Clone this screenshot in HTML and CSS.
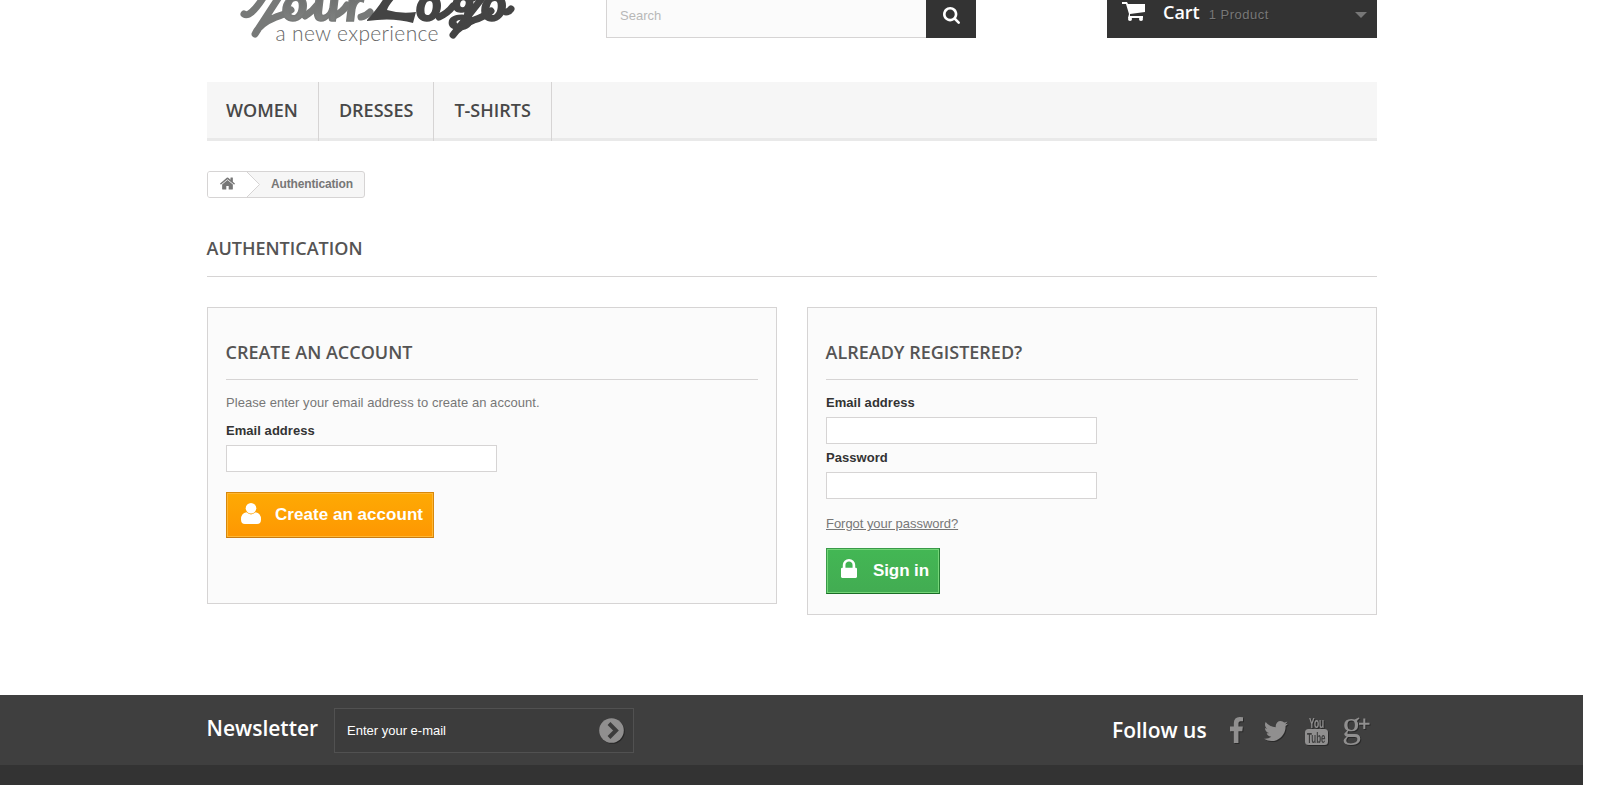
FILE: index.html
```html
<!DOCTYPE html>
<html lang="en">
<head>
<meta charset="utf-8">
<title>Login - My Store</title>
<link rel="stylesheet" href="styles.css">
</head>
<body>
<div class="page">
  <header class="container header">
    <a class="logo">
      <svg width="300" height="60" viewBox="230 0 300 60">
        <defs><linearGradient id="ink" x1="0" y1="0" x2="0" y2="1"><stop offset="0" stop-color="#5f6160"/><stop offset="1" stop-color="#858786"/></linearGradient></defs>
        <path class="swash-light" d="M244 14Q250 18 263 -2M279 -3L255 34Q259 24 276 17Q284 15 291 10M305 16Q313 11 318 4M334 16Q343 12 347 5M361 17Q366 16 370 12"/>
        <path class="wedge" d="M367 20Q378 8 384 -2H395Q388 6 387 10Q400 14 416 12L413 23Q393 17 367 21Z"/>
        <path class="swash-dark" d="M439 17Q448 13 453 6M483 -3L453 35Q459 26 474 20Q484 17 491 11M506 12Q509 12 511 9"/>
        <text class="mark light" x="282 313 346" y="21">our</text>
        <text class="mark dark" x="416 451 481" y="21">ogo</text>
        <text class="tagline" x="275.500" y="40.500" textLength="163">a new experience</text>
      </svg>
    </a>
    <div class="search">
      <span class="search-field">Search</span>
      <span class="search-button"><svg width="17" height="17" viewBox="64 128 1664 1664"><path d="M1216 832q0-185-131.500-316.500t-316.500-131.500-316.500 131.500-131.500 316.500 131.500 316.500 316.500 131.500 316.500-131.500 131.500-316.500zm512 832q0 52-38 90t-90 38q-54 0-90-38l-343-342q-179 124-399 124-143 0-273.500-55.500t-225-150-150-225-55.500-273.500 55.500-273.500 150-225 225-150 273.500-55.500 273.500 55.500 225 150 150 225 55.500 273.500q0 220-124 399l343 343q37 37 37 90z"/></svg></span>
    </div>
    <div class="cart">
      <svg class="cart-icon" width="23" height="19" viewBox="0 0 23 19"><path d="M0 0H5L6 2H23V10L8 12V14H21V16H6L7 12L4 2H0Z"/><circle cx="8" cy="17" r="2"/><circle cx="19" cy="17" r="2"/></svg>
      <b class="cart-title">Cart</b><span class="cart-count">1 Product</span>
      <svg class="cart-arrow" width="12" height="6" viewBox="0 0 12 6"><path d="M0 0H12L6 6Z"/></svg>
    </div>
  </header>

  <nav class="container menu">
    <a>Women</a><a>Dresses</a><a>T-shirts</a>
  </nav>

  <div class="container">
    <div class="breadcrumb">
      <span class="home"><svg width="15" height="13" viewBox="89 244 1614 1292"><path d="M1472 992v480q0 26-19 45t-45 19h-384v-384h-256v384h-384q-26 0-45-19t-19-45v-480q0-1 .5-3t.5-3l575-474 575 474q1 2 1 6zm223-69l-62 74q-8 9-21 11h-3q-13 0-21-7l-692-577-692 577q-12 8-24 7-13-2-21-11l-62-74q-8-10-7-23.500t11-21.500l719-599q32-26 76-26t76 26l244 204v-195q0-14 9-23t23-9h192q14 0 23 9t9 23v408l219 182q10 8 11 21.500t-7 23.500z"/></svg></span>
      <svg class="crumb-arrow" width="13" height="25" viewBox="0 0 13 25"><path class="fill" d="M0 0L12.500 12.500L0 25Z"/><path class="edge" d="M0 0L12.500 12.500L0 25"/></svg>
      <span class="crumb">Authentication</span>
    </div>
    <h1 class="page-heading">Authentication</h1>
    <main class="columns">
      <form class="box create">
        <h3 class="subheading">Create an account</h3>
        <p class="hint">Please enter your email address to create an account.</p>
        <label class="label">Email address</label>
        <div class="input"></div>
        <div class="button orange">
          <svg width="20" height="21" viewBox="0 0 20 21"><path d="M5.500 9.300Q10 13.500 14.500 9.300Q20 10 20 16.500Q20 21 16 21H4Q0 21 0 16.500Q0 10 5.500 9.300Z"/><circle cx="10" cy="5.300" r="5.300"/></svg>
          <span>Create an account</span>
        </div>
      </form>
      <form class="box login">
        <h3 class="subheading">Already registered?</h3>
        <label class="label">Email address</label>
        <div class="input"></div>
        <label class="label second">Password</label>
        <div class="input"></div>
        <a class="forgot">Forgot your password?</a>
        <div class="button green">
          <svg width="16" height="19" viewBox="320 128 1152 1408" preserveAspectRatio="none"><path d="M640 768h512v-192q0-106-75-181t-181-75-181 75-75 181v192zm832 96v576q0 40-28 68t-68 28h-960q-40 0-68-28t-28-68v-576q0-40 28-68t68-28h32v-192q0-184 132-316t316-132 316 132 132 316v192h32q40 0 68 28t28 68z"/></svg>
          <span>Sign in</span>
        </div>
      </form>
    </main>
  </div>

  <footer class="footer">
    <div class="container footer-row">
      <h4 class="newsletter-title">Newsletter</h4>
      <div class="newsletter-field"><span>Enter your e-mail</span>
        <svg class="go" width="26" height="26" viewBox="0 0 26 26"><circle cx="12.500" cy="12.500" r="12.300"/><path d="M10 5.500L17 12.500L10 19.500"/></svg>
      </div>
      <h4 class="follow-title">Follow us</h4>
      <div class="social">
        <svg width="13" height="26" viewBox="479 0 864 1664" preserveAspectRatio="none"><path d="M1343 12v264h-157q-86 0-116 36t-30 108v189h293l-39 296h-254v759h-306v-759h-255v-296h255v-218q0-186 104-288.500t277-102.500q147 0 228 12z"/></svg>
        <svg class="twitter" width="24" height="20" viewBox="108 256 1576 1280" preserveAspectRatio="none"><path d="M1684 408q-67 98-162 167 1 14 1 42 0 130-38 259.500t-115.500 248.500-184.500 210.500-258 146-323 54.500q-271 0-496-145 35 4 78 4 225 0 401-138-105-2-188-64.500t-114-159.500q33 5 61 5 43 0 85-11-112-23-185.500-111.500t-73.500-205.500v-4q68 38 146 41-66-44-105-115t-39-154q0-88 44-163 121 149 294.500 238.500t371.500 99.500q-8-38-8-74 0-134 94.500-228.500t228.500-94.500q140 0 236 102 109-21 205-78-37 115-142 178 93-10 186-50z"/></svg>
        <svg class="youtube" width="23" height="28" viewBox="0 0 23 28"><text class="you" transform="translate(4 10.500) scale(.6 1)">You</text><rect y="12" width="23" height="16" rx="3.500"/><text class="tube" transform="translate(2 25.500) scale(.57 1)">Tube</text></svg>
        <svg class="google" width="27" height="28" viewBox="0 0 27 28"><text x="-1" y="19.500">g</text><path d="M16 6.800H26.500M21.300 1.500V12"/></svg>
      </div>
    </div>
  </footer>
</div>
</body>
</html>
```

FILE: styles.css
```css
* { box-sizing: border-box; }
body { margin: 0; background: #fff; overflow: hidden; font: 13px/18px "Liberation Sans", Arial, sans-serif; color: #777; }
h1, h3, h4, p { margin: 0; }
svg { display: block; flex: none; }
.page { width: 1583px; height: 785px; display: flex; flex-direction: column; }
.container { width: 1170px; margin-left: 207px; }

.header { display: flex; height: 82px; align-items: flex-start; }
.logo { margin-left: 23px; width: 376px; }
.mark { font: italic 900 49px Lato, sans-serif; stroke-width: 1.5; }
.light { fill: url(#ink); stroke: #777978; }
.dark { fill: #444; stroke: #444; }
.swash-light, .swash-dark { fill: none; stroke-width: 7; stroke-linecap: round; stroke-linejoin: round; }
.swash-light { stroke: #777978; }
.swash-dark { stroke: #444; }
.wedge { fill: #444; }
.tagline { font: 300 21px Lato, sans-serif; fill: #666; }
.search { display: flex; width: 370px; height: 38px; }
.search-field { flex: 1; padding: 7px 13px; background: #fbfbfb; border: solid #d6d4d4; border-width: 0 0 1px 1px; color: #b8b8b8; }
.search-button { width: 50px; background: #333; padding: 7px 0 0 17px; }
.search-button svg { fill: #fff; }
.cart { display: flex; width: 270px; height: 38px; margin-left: auto; padding-left: 15px; background: #333; }
.cart-icon { margin-top: 2px; fill: #fff; }
.cart-title { margin-left: 18px; font: 600 18px/25px "Open Sans", sans-serif; color: #fff; }
.cart-count { margin: 6px 0 0 9px; letter-spacing: .5px; text-shadow: 1px 1px rgba(0,0,0,.2); }
.cart-arrow { margin: 12px 10px 0 auto; fill: #777; }

.menu { display: flex; height: 59px; background: linear-gradient(#f6f6f6 56px, #e9e9e9 56px); }
.menu a { padding: 17px 20px 0; border-right: 1px solid #d6d4d4; font: 600 18px/22px "Open Sans", sans-serif; color: #484848; text-transform: uppercase; }
.menu a:first-child { padding-left: 19px; }

.breadcrumb { display: flex; width: 158px; height: 27px; margin-top: 30px; border: 1px solid #d6d4d4; border-radius: 3px; background: #f6f6f6; font-size: 12px; font-weight: bold; line-height: 24px; overflow: hidden; }
.home { width: 39px; padding: 5px 0 0 12px; background: #fff; }
.home svg { fill: #777; }
.crumb-arrow .fill { fill: #fff; }
.crumb-arrow .edge { fill: none; stroke: #d6d4d4; }
.crumb { margin-left: 11px; letter-spacing: -.15px; }
.page-heading { margin: 39px 0 30px; height: 40px; border-bottom: 1px solid #d6d4d4; font: 600 18px/22px "Open Sans", sans-serif; color: #555454; text-transform: uppercase; text-indent: -.5px; }

.columns { display: grid; grid-template-columns: 570px 570px; gap: 30px; align-items: start; }
.box { padding: 0 18px; border: 1px solid #d6d4d4; background: #fbfbfb; }
.create { height: 297px; }
.login { height: 308px; }
.subheading { margin-top: 33px; height: 39px; border-bottom: 1px solid #d6d4d4; font: 600 18px/22px "Open Sans", sans-serif; color: #555454; text-transform: uppercase; text-indent: -.5px; }
.hint { margin-top: 14px; letter-spacing: .04px; }
.label { display: block; margin-top: 14px; font-weight: bold; color: #333; letter-spacing: .05px; }
.hint + .label { margin-top: 10px; }
.label.second { margin-top: 5px; }
.input { width: 271px; height: 27px; margin-top: 5px; border: 1px solid #d6d4d4; background: #fff; }
.button { display: flex; height: 46px; font: bold 17px/21px "Liberation Sans", Arial, sans-serif; color: #fff; padding: 11px 0 0 14px; border: 1px solid; }
.button svg { fill: #fff; }
.orange { width: 208px; margin-top: 20px; border-color: #d8880b #d8880b #c87a13; background: linear-gradient(#feaa04, #fe9702); box-shadow: inset 0 0 0 1px #ffb734; }
.orange svg { margin-top: -1px; }
.orange span { margin-left: 14px; letter-spacing: .04px; }
.green { width: 114px; margin-top: 15px; border-color: #399a49 #247f32 #1a6d27 #399a49; background: linear-gradient(#43b754, #42ac52); box-shadow: inset 0 0 0 1px #74d578; }
.green svg { margin-top: -1px; }
.green span { margin-left: 16px; letter-spacing: -.1px; }
.forgot { display: block; margin-top: 16px; text-decoration: underline; letter-spacing: -.04px; }

.footer { margin-top: 80px; flex: 1; background: linear-gradient(#3f3f3f 70px, #333 70px); }
.footer-row { display: flex; }
.footer h4 { font: 600 21px/25px "Open Sans", sans-serif; color: #fff; white-space: nowrap; }
.newsletter-title { width: 127px; margin-top: 21px; text-indent: -.5px; }
.newsletter-field { display: flex; justify-content: space-between; width: 300px; height: 45px; margin-top: 13px; padding: 9px 8px 0 12px; border: 1px solid #515151; background: #3c3c3c; color: #fff; }
.newsletter-field span { margin-top: 4px; }
.go { filter: drop-shadow(1px 1px 0 rgba(0,0,0,.35)); }
.go circle { fill: #908f8f; }
.go path { fill: none; stroke: #3c3c3c; stroke-width: 4; }
.footer .follow-title { margin: 23px 0 0 478px; width: 118px; }
.social { display: flex; margin-top: 22px; }
.social svg { fill: #908f8f; overflow: visible; filter: drop-shadow(1px 1px 0 rgba(0,0,0,.35)); }
.twitter { margin: 4px 0 0 21px; }
.youtube { margin-left: 17px; }
.you { font: bold 14px "Liberation Sans", sans-serif; }
.tube { font: bold 14px "Liberation Sans", sans-serif; fill: #3f3f3f; }
.google { margin-left: 15px; }
.google text { font: 38px "Liberation Serif", serif; }
.google path { stroke: #908f8f; stroke-width: 2; }
```
